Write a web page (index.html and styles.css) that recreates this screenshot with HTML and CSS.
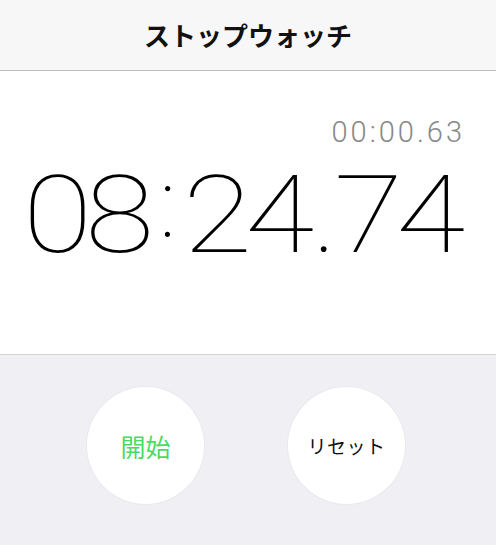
FILE: index.html
```html
<!DOCTYPE html>
<html lang="ja">
<head>
<meta charset="utf-8">
<link rel="stylesheet" href="styles.css">
</head>
<body>
<header class="bar"><h1 class="title">ストップウォッチ</h1></header>
<main class="display">
  <div class="lap">00:00.63</div>
  <div class="time"><span class="g">08</span><span class="s colon">:</span><span class="g">24</span><span class="s dot">.</span><span class="g">74</span></div>
</main>
<section class="controls">
  <button class="btn start">開始</button>
  <button class="btn reset">リセット</button>
</section>
</body>
</html>
```
FILE: styles.css
```css
html, body { margin: 0; padding: 0; }
body {
  width: 496px;
  height: 545px;
  overflow: hidden;
  background: #efeff4;
  font-family: "Noto Sans CJK JP", "Noto Sans", sans-serif;
}
.bar {
  height: 70px;
  background: #f7f7f7;
  border-bottom: 1px solid #bdbdbd;
  display: flex;
  align-items: center;
  justify-content: center;
}
.title {
  margin: 0;
  font-size: 26px;
  font-weight: 700;
  color: #111;
  line-height: 1;
}
.display {
  height: 284px;
  background: #fff;
  border-bottom: 1px solid #d2d2d2;
  box-sizing: border-box;
  padding-top: 47px;
}
.lap {
  font-family: Roboto, sans-serif;
  font-weight: 300;
  font-size: 29px;
  line-height: 29px;
  letter-spacing: 3px;
  color: #888;
  text-align: right;
  padding-right: 31px;
}
.time {
  padding-left: 22px;
  margin-top: 3px;
  font-family: Roboto, sans-serif;
  font-weight: 100;
  font-size: 108px;
  line-height: 108px;
  color: #000;
  white-space: nowrap;
}
.g {
  display: inline-block;
  margin: 0 10px;
  letter-spacing: -6px;
  transform: scaleX(1.17);
}
.s { display: inline-block; box-sizing: border-box; text-align: center; }
.colon { width: 34px; padding-left: 5px; font-size: 96px; vertical-align: 15px; }
.dot { width: 25px; padding-left: 3px; letter-spacing: -4px; }
.controls {
  display: flex;
  gap: 84px;
  padding: 32px 0 0 87px;
}
.btn {
  width: 117px;
  height: 117px;
  border-radius: 50%;
  border: none;
  background: #fff;
  box-shadow: 0 0 0 1px #e9e9ee;
  font-family: "Noto Sans CJK JP", sans-serif;
  padding: 0;
}
.start { color: #4cd964; font-size: 25px; font-weight: 400; }
.reset { color: #111; font-size: 19px; font-weight: 400; letter-spacing: 0.5px; }
```
